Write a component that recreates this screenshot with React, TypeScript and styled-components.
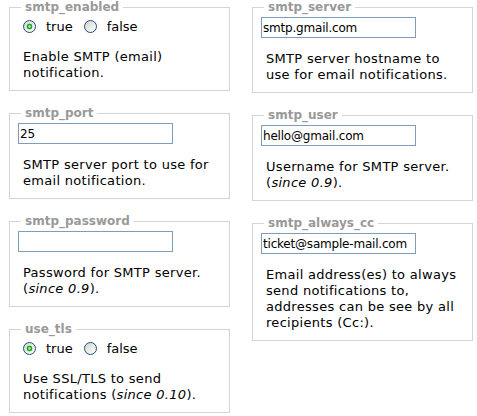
import * as React from 'react'
import styled, { createGlobalStyle } from 'styled-components'

const GlobalStyle = createGlobalStyle`
  body {
    margin: 0;
    background: #fff;
    color: #000;
    font-family: 'DejaVu Sans', Verdana, sans-serif;
    font-size: 13px;
  }
`

const Panel = styled.div`
  display: flex;
  align-items: flex-start;
  gap: 22px;
  padding-left: 9px;
`

const Column = styled.div`
  display: flex;
  flex-direction: column;
  gap: 15px;
  width: 221px;
`

const Fieldset = styled.fieldset`
  margin: 0;
  min-width: 0;
  width: 221px;
  box-sizing: border-box;
  border: 1px solid #d4d4d4;
  padding: 3px 8px 9px;
`

const Legend = styled.legend`
  margin-left: 3px;
  padding: 0 4px;
  font-size: 12px;
  font-weight: bold;
  line-height: 14px;
  color: #999;
`

const TextInput = styled.input`
  display: block;
  margin: 0;
  width: 155px;
  height: 21px;
  box-sizing: border-box;
  border: 1px solid #7f9db9;
  padding: 0 1px;
  font-family: 'DejaVu Sans', Tahoma, sans-serif;
  font-size: 12px;
  letter-spacing: -0.2px;
  color: #000;
  background: #fff;
  outline: none;
`

const RadioRow = styled.div`
  display: flex;
  align-items: center;
  height: 19px;
`

const RadioLabel = styled.label`
  display: inline-flex;
  align-items: center;
  gap: 10px;
  margin-left: 5px;

  & + & {
    margin-left: 11px;
  }
`

const Radio = styled.input.attrs({ type: 'radio' })`
  appearance: none;
  margin: 0 0 1px;
  width: 13px;
  height: 13px;
  box-sizing: border-box;
  border: 1px solid #1c5180;
  border-radius: 50%;
  background: linear-gradient(135deg, #d4d4cf, #ffffff);

  &:checked {
    background: radial-gradient(circle, #8fe88f 0 1px, #21a621 1.6px 2.6px, transparent 3.2px),
      linear-gradient(135deg, #d4d4cf, #ffffff);
  }
`

const Hint = styled.p`
  margin: 13px 0 0;
  padding: 0 2px 0 5px;
  line-height: 16px;
  letter-spacing: 0.3px;
`

type Option = {
  name: string
  kind: 'bool' | 'text'
  value: string | boolean
  hint: React.ReactNode
}

const left: Option[] = [
  { name: 'smtp_enabled', kind: 'bool', value: true, hint: 'Enable SMTP (email) notification.' },
  { name: 'smtp_port', kind: 'text', value: '25', hint: 'SMTP server port to use for email notification.' },
  {
    name: 'smtp_password',
    kind: 'text',
    value: '',
    hint: (
      <>
        Password for SMTP server. (<em>since 0.9</em>).
      </>
    ),
  },
  {
    name: 'use_tls',
    kind: 'bool',
    value: true,
    hint: (
      <>
        Use SSL/TLS to send notifications (<em>since 0.10</em>).
      </>
    ),
  },
]

const right: Option[] = [
  { name: 'smtp_server', kind: 'text', value: 'smtp.gmail.com', hint: 'SMTP server hostname to use for email notifications.' },
  {
    name: 'smtp_user',
    kind: 'text',
    value: 'hello@gmail.com',
    hint: (
      <>
        Username for SMTP server. (<em>since 0.9</em>).
      </>
    ),
  },
  {
    name: 'smtp_always_cc',
    kind: 'text',
    value: 'ticket@sample-mail.com',
    hint: 'Email address(es) to always send notifications to, addresses can be see by all recipients (Cc:).',
  },
]

const OptionBox = ({ option }: { option: Option }) => (
  <Fieldset>
    <Legend>{option.name}</Legend>
    {option.kind === 'bool' ? (
      <RadioRow>
        <RadioLabel>
          <Radio name={option.name} defaultChecked={option.value === true} />
          true
        </RadioLabel>
        <RadioLabel>
          <Radio name={option.name} defaultChecked={option.value === false} />
          false
        </RadioLabel>
      </RadioRow>
    ) : (
      <TextInput type={option.name === 'smtp_password' ? 'password' : 'text'} defaultValue={option.value as string} />
    )}
    <Hint>{option.hint}</Hint>
  </Fieldset>
)

export default function App() {
  return (
    <>
      <GlobalStyle />
      <Panel>
        <Column>
          {left.map(o => (
            <OptionBox key={o.name} option={o} />
          ))}
        </Column>
        <Column>
          {right.map(o => (
            <OptionBox key={o.name} option={o} />
          ))}
        </Column>
      </Panel>
    </>
  )
}
